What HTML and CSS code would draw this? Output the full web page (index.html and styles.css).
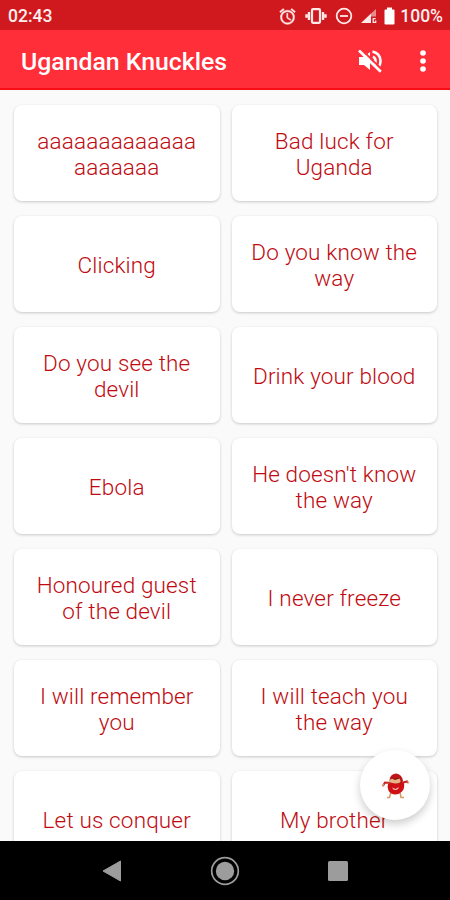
FILE: index.html
```html
<!DOCTYPE html>
<html lang="en">

<head>
    <meta charset="UTF-8">
    <meta name="viewport" content="width=device-width, initial-scale=1.0">
    <title>Ugandan Knuckles</title>
    <link rel="stylesheet" href="styles.css">
</head>

<body>
    <div class="status-bar">
        <span class="clock">02:43</span>
        <div class="status-icons">
            <svg class="alarm" width="19" height="19" viewBox="0 0 24 24" fill="#ffe9e9" stroke="#ffe9e9" stroke-width="0.500">
                <path d="M22 5.700l-4.600-3.900-1.300 1.500 4.600 3.900L22 5.700zM7.900 3.400L6.600 1.900 2 5.700l1.300 1.500 4.600-3.800zM12.500 8H11v6l4.700 2.900.8-1.200-4-2.400V8zM12 4a9 9 0 1 0 0 18 9 9 0 0 0 0-18zm0 16a7 7 0 1 1 0-14 7 7 0 0 1 0 14z"/>
            </svg>
            <svg class="vibrate" width="22" height="18" viewBox="0 0 22 18">
                <rect x="7" y="2.200" width="8" height="13.600" rx="1" fill="none" stroke="#ffe9e9" stroke-width="2.200"/>
                <path d="M4 5v8M18 5v8M1.500 7.200v3.600M20.500 7.200v3.600" fill="none" stroke="#ffe9e9" stroke-width="2.400"/>
            </svg>
            <svg class="dnd" width="18" height="18" viewBox="0 0 18 18" fill="none" stroke="#ffe9e9" stroke-width="1.800">
                <circle cx="9" cy="9" r="7.300"/>
                <path d="M5 9h8"/>
            </svg>
            <svg class="signal" width="16" height="16" viewBox="0 0 16 16">
                <path d="M0 15L10 5.500V15z" fill="#ffe9e9"/>
                <path d="M10 8.500h5V1l-5 4.500z" fill="#e98b8d"/>
                <path d="M14.700 10.700h-2.500v3.600h2.500v-1.800" fill="none" stroke="#ffe9e9" stroke-width="1.300"/>
            </svg>
            <svg class="battery" width="11" height="18" viewBox="0 0 11 18" fill="#fff">
                <path d="M3 0.500h5v2h1.500q1 0 1 1v13q0 1-1 1h-8q-1 0-1-1v-13q0-1 1-1H3z"/>
            </svg>
            <span class="percent">100%</span>
        </div>
    </div>

    <div class="app-bar">
        <h1>Ugandan Knuckles</h1>
        <svg class="mute" width="26" height="24" viewBox="0 0 26 24">
            <path d="M2 8h5l6-5v18l-6-5H2z" fill="#fff"/>
            <path d="M16 7.500q2.500 1.500 2.500 4.500t-2.500 4.500M15.500 2.500C21 4 23.500 8 23.500 12q0 3-1.500 5.500" fill="none" stroke="#fff" stroke-width="2.600"/>
            <path d="M3.800-.2L26 21.600" stroke="#ff2e38" stroke-width="2"/>
            <path d="M2 1.500L23.800 22.800" stroke="#fff" stroke-width="2.700"/>
        </svg>
        <svg class="more" width="6" height="22" viewBox="0 0 6 22" fill="#fff">
            <circle cx="3" cy="3" r="2.800"/>
            <circle cx="3" cy="11" r="2.800"/>
            <circle cx="3" cy="19" r="2.800"/>
        </svg>
    </div>

    <div class="sounds">
        <div class="card">aaaaaaaaaaaaa<br>aaaaaaa</div>
        <div class="card">Bad luck for<br>Uganda</div>
        <div class="card">Clicking</div>
        <div class="card">Do you know the<br>way</div>
        <div class="card">Do you see the<br>devil</div>
        <div class="card">Drink your blood</div>
        <div class="card">Ebola</div>
        <div class="card">He doesn't know<br>the way</div>
        <div class="card">Honoured guest<br>of the devil</div>
        <div class="card">I never freeze</div>
        <div class="card">I will remember<br>you</div>
        <div class="card">I will teach you<br>the way</div>
        <div class="card">Let us conquer</div>
        <div class="card">My brother</div>
    </div>

    <div class="fab">
        <svg width="28" height="28" viewBox="0 0 28 28">
            <path d="M9 11L3 10.500.8 14M19 11l6-1.500 1 1.500" fill="none" stroke="#c62a22" stroke-width="2"/>
            <path d="M1.500 12l-.8 2.500M25.500 9.500l1.500 2" stroke="#d8a878" stroke-width="1.200"/>
            <path d="M9 20l-1.500 5.500H5M18 20l1 5.500h3" fill="none" stroke="#d39a66" stroke-width="1.500"/>
            <path d="M6 12q7-3 16-1 1 5-2 8.500-3 3-6.500 3-5 0-7-4Q5 15 6 12z" fill="#cf1014"/>
            <path d="M7.500 9q0-7 6.500-7.500 6 .5 7 7.500l-2 3H9z" fill="#bd1519"/>
            <path d="M7 9q1-2 3.500-2.500l3 1 4-1q1.500 2 .5 4-5 2-11-.5z" fill="#e8b486"/>
            <path d="M10 6l3 1.500 4-1.500" fill="none" stroke="#7d1710" stroke-width="1"/>
            <path d="M10 15.500l3.500 1.500 3.500-2q-1 3-3.500 3T10 15.500z" fill="#ffc8c8"/>
        </svg>
    </div>

    <div class="nav-bar">
        <svg width="20" height="22" viewBox="0 0 20 22" fill="#9c9c9c">
            <path d="M1 11L18.500 1v20z" stroke="#9c9c9c" stroke-linejoin="round"/>
        </svg>
        <svg width="30" height="30" viewBox="0 0 30 30">
            <circle cx="15" cy="15" r="13.300" fill="none" stroke="#9c9c9c" stroke-width="1.700"/>
            <circle cx="15" cy="15" r="9.200" fill="#9c9c9c"/>
        </svg>
        <svg width="20" height="20" viewBox="0 0 20 20" fill="#9c9c9c">
            <rect width="20" height="20" rx="1.500"/>
        </svg>
    </div>
</body>

</html>
```
FILE: styles.css
```css
body {
    display: flex;
    flex-direction: column;
    height: 900px;
    margin: 0;
    overflow: hidden;
    background-color: #fafafa;
    font-family: Roboto, sans-serif;
}

.status-bar {
    display: flex;
    align-items: center;
    justify-content: space-between;
    box-sizing: border-box;
    height: 30px;
    padding: 2px 7px 0 8px;
    flex-shrink: 0;
    background-color: #d0191e;
    color: #ffefef;
    font-size: 17.500px;
    font-weight: 500;
}

.status-icons {
    display: flex;
    align-items: center;
}

.vibrate {
    margin-left: 8px;
}

.dnd {
    margin-left: 8px;
}

.signal {
    margin-left: 8px;
}

.battery {
    margin-left: 7px;
}

.percent {
    margin-left: 5px;
}

.app-bar {
    display: flex;
    align-items: center;
    box-sizing: border-box;
    height: 60px;
    padding: 3px 24px 0 21px;
    flex-shrink: 0;
    background-color: #ff2e38;
    border-bottom: 2px solid #fa0d15;
    color: #fff;
}

h1 {
    flex: 1;
    margin: 0;
    padding-top: 2px;
    font-size: 24.800px;
    font-weight: 500;
}

.more {
    margin-left: 37px;
}

.sounds {
    display: grid;
    grid-template-columns: 1fr 1fr;
    grid-auto-rows: 96px;
    gap: 15px 12px;
    flex: 1;
    min-height: 0;
    padding: 15px 13px 0 14px;
    overflow: hidden;
}

.card {
    display: flex;
    align-items: center;
    justify-content: center;
    padding-top: 1px;
    box-sizing: border-box;
    border-radius: 8px;
    background-color: #fff;
    box-shadow: 0 1px 3px rgba(0, 0, 0, 0.2);
    color: #c00a10;
    font-size: 22.500px;
    font-weight: 300;
    line-height: 26px;
    letter-spacing: 0.150px;
    text-align: center;
    white-space: nowrap;
}

/* floating button over the list */
.fab {
    position: absolute;
    left: 360px;
    top: 750px;
    display: flex;
    align-items: center;
    justify-content: center;
    box-sizing: border-box;
    width: 70px;
    height: 70px;
    padding: 2px 0 0 1px;
    border-radius: 50%;
    background-color: #fff;
    box-shadow: 0 4px 8px rgba(0, 0, 0, 0.2);
}

.nav-bar {
    display: flex;
    align-items: center;
    justify-content: space-between;
    box-sizing: border-box;
    height: 59px;
    padding: 0 102px;
    flex-shrink: 0;
    background-color: #000;
}
```
